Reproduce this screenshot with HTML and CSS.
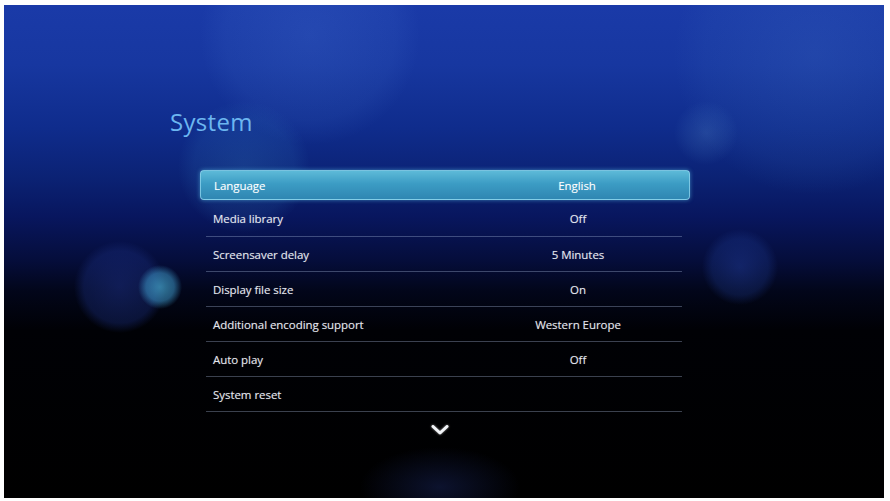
FILE: index.html
```html
<!DOCTYPE html>
<html>
<head>
<meta charset="utf-8">
<link rel="stylesheet" href="styles.css">
</head>
<body>
<div class="screen">
  <h1 class="title">System</h1>
  <div class="menu">
    <div class="row row-active"><span class="label">Language</span><span class="value">English</span></div>
    <div class="row"><span class="label">Media library</span><span class="value">Off</span></div>
    <div class="row"><span class="label">Screensaver delay</span><span class="value">5 Minutes</span></div>
    <div class="row"><span class="label">Display file size</span><span class="value">On</span></div>
    <div class="row"><span class="label">Additional encoding support</span><span class="value">Western Europe</span></div>
    <div class="row"><span class="label">Auto play</span><span class="value">Off</span></div>
    <div class="row"><span class="label">System reset</span><span class="value"></span></div>
  </div>
  <div class="more">
    <svg width="20" height="12" viewBox="0 0 20 12"><path d="M3 2.5 L10 9 L17 2.5" fill="none" stroke="#f2f4f8" stroke-width="3" stroke-linecap="round" stroke-linejoin="round"/></svg>
  </div>
</div>
</body>
</html>
```
FILE: styles.css
```css
html, body {
  margin: 0;
  padding: 0;
  background: #ffffff;
}
body {
  padding: 5px 6px 3px 4px;
  width: 880px;
  height: 493px;
}
.screen {
  width: 880px;
  height: 493px;
  box-sizing: border-box;
  padding: 101px 0 0 0;
  font-family: "Open Sans", "Noto Sans", sans-serif;
  background:
    radial-gradient(circle at 156px 282px, rgba(70,170,210,0.7) 0, rgba(60,150,200,0.55) 14px, rgba(40,110,180,0) 22px),
    radial-gradient(circle at 116px 282px, rgba(30,50,140,0.5) 0, rgba(25,45,125,0.4) 36px, rgba(20,40,120,0) 46px),
    radial-gradient(circle at 736px 262px, rgba(35,65,165,0.45) 0, rgba(30,60,150,0.3) 28px, rgba(20,40,120,0) 38px),
    radial-gradient(circle at 240px 162px, rgba(60,140,200,0.22) 0, rgba(50,120,190,0.15) 50px, rgba(40,100,180,0) 66px),
    radial-gradient(circle at 702px 128px, rgba(110,170,220,0.2) 0, rgba(90,150,210,0.1) 20px, rgba(80,140,210,0) 32px),
    radial-gradient(circle at 306px 30px, rgba(90,140,230,0.18) 0, rgba(80,130,220,0.1) 85px, rgba(70,120,210,0) 110px),
    radial-gradient(circle at 810px 50px, rgba(70,120,200,0.22) 0, rgba(60,110,190,0.1) 110px, rgba(50,100,180,0) 140px),
    radial-gradient(ellipse 80px 40px at 436px 482px, rgba(40,60,150,0.3) 0, rgba(40,60,150,0) 100%),
    linear-gradient(to bottom, #1a3aa8 0%, #1737a0 12%, #0f2c8c 25%, #0b2274 35%, #08165e 43%, #050d3a 52%, #02061a 58%, #000105 66%, #000 100%);
}
.title {
  margin: 0 0 32px 166px;
  font-weight: 400;
  font-size: 24px;
  line-height: 32px;
  color: #6cb6f0;
  letter-spacing: 0.3px;
}
.menu {
  margin-left: 196px;
  width: 490px;
  display: flex;
  flex-direction: column;
}
.row {
  display: grid;
  grid-template-columns: 1fr 200px;
  align-items: center;
  height: 34px;
  margin: 0 8px 0 6px;
  padding: 0 4px 0 7px;
  border-bottom: 1px solid rgba(170,185,220,0.35);
  font-size: 11.5px;
  color: #e4e7ef;
  letter-spacing: -0.05px;
  text-shadow: 0 0 1px rgba(255,255,255,0.35);
}
.row:nth-child(2) {
  height: 35px;
  margin-top: 1px;
}
.row-active {
  height: 30px;
  margin: 0;
  padding: 0 12px 0 13px;
  border: 1px solid rgba(140,210,235,0.8);
  border-bottom: 1px solid rgba(140,210,235,0.8);
  border-radius: 4px;
  box-sizing: border-box;
  background: linear-gradient(to bottom, #5dbad8 0%, #3c9cc4 45%, #2f86b2 100%);
  box-shadow: 0 0 4px rgba(90,190,230,0.6);
  color: #ffffff;
}
.value {
  text-align: center;
}
.more {
  display: flex;
  justify-content: center;
  margin-top: 12px;
  width: 872px;
}
.more svg {
  filter: drop-shadow(0 0 1px rgba(255,255,255,0.6));
}
```
